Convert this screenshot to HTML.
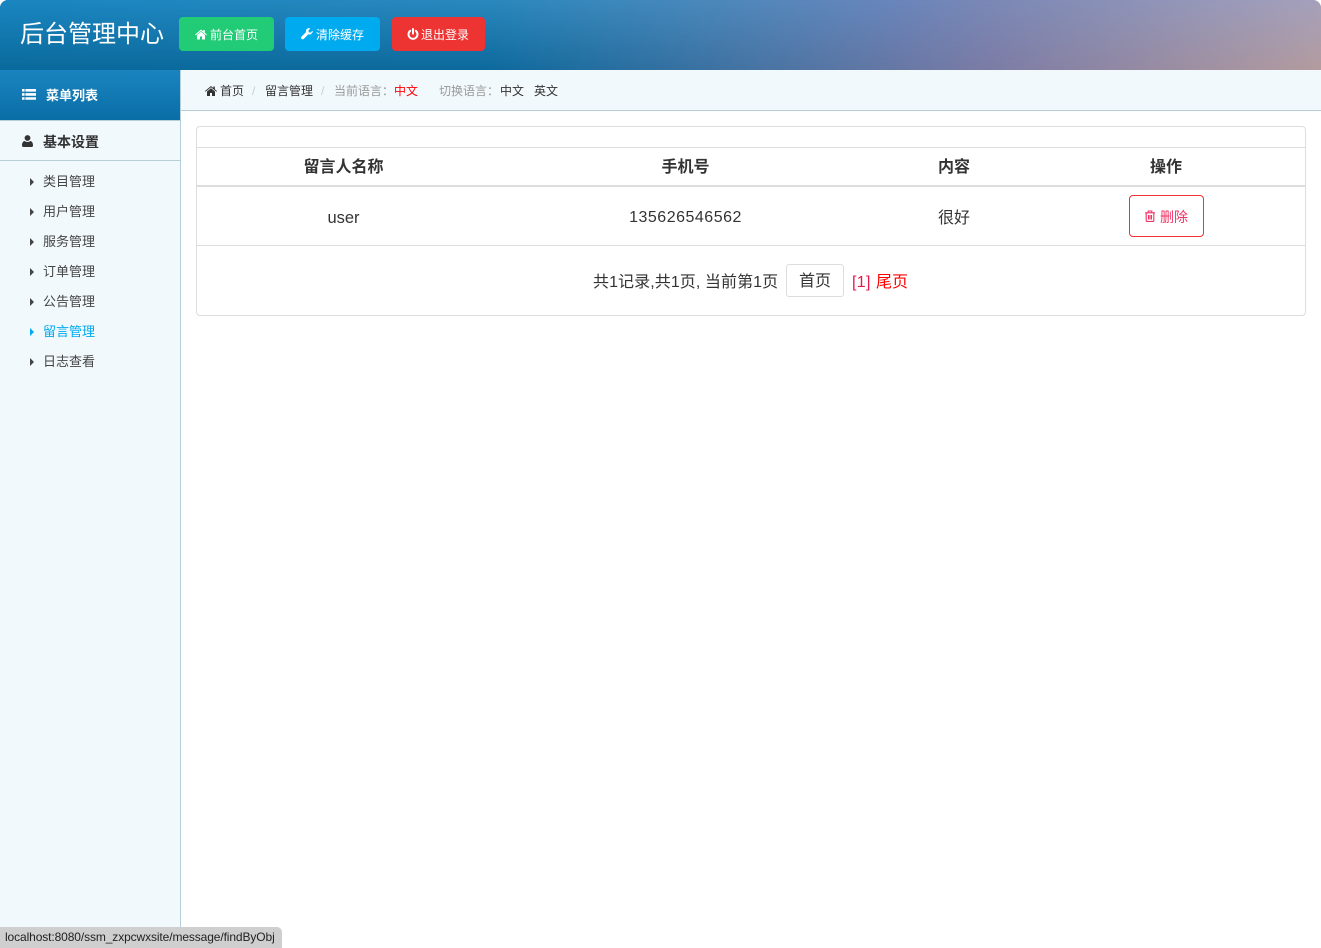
<!DOCTYPE html>
<html lang="zh-CN">
<head>
<meta charset="utf-8">
<title>后台管理中心</title>
<style>
*{box-sizing:border-box}
html,body{margin:0;padding:0;background:#fff}
body{position:relative;width:1321px;height:948px;overflow:hidden;font-family:"Liberation Sans","Noto Sans CJK SC",sans-serif;color:#333}
.a{position:absolute;white-space:nowrap}
svg{display:block;position:absolute}
#hd{left:0;top:0;width:1321px;height:70px;border-radius:8px 8px 0 0;overflow:hidden;background:linear-gradient(to right,#0a6a9c 0px,#0e6a9d 490px,#3a72a2 700px,#6878a5 900px,#7c7ca6 990px,#b49c9f 1321px)}
#hd i{position:absolute;left:0;top:0;width:100%;height:100%;background:linear-gradient(to right,#1a86c1 0px,#2a88bd 490px,#4a88bb 700px,#6a85bb 900px,#7a88b5 990px,#a5a0bb 1321px);-webkit-mask-image:linear-gradient(to bottom,#000,transparent);mask-image:linear-gradient(to bottom,#000,transparent)}
.logo{left:20px;top:16px;font-size:24px;line-height:38px;color:#fff}
.btn{top:17px;height:34px;border-radius:4px;color:#fff;font-size:12px;line-height:36px}
.btn span{position:absolute;top:0;left:31px}
#side{left:0;top:70px;width:181px;height:878px;background:#f2f9fd;border-right:1px solid #b5cfd9}
#mh{left:0;top:70px;width:180px;height:51px;background:linear-gradient(to bottom,#1a84c0,#0a6ea6);border-bottom:1px solid #b5cfd9}
#bs{left:0;top:121px;width:180px;height:40px;border-bottom:1px solid #b5cfd9}
.mi{left:43px;font-size:13px;line-height:20px;color:#444}
.ar{left:30px;width:0;height:0;border-left:4.5px solid #444;border-top:4px solid transparent;border-bottom:4px solid transparent}
#bc{left:181px;top:70px;width:1140px;height:41px;background:#f2f9fd;border-bottom:1px solid #b5cfd9}
.bt{top:81px;font-size:12px;line-height:20px}
.card{left:196px;top:126px;width:1110px;height:190px;border:1px solid #ddd;border-radius:4px;background:#fff}
.ln{left:197px;width:1108px;background:#ddd}
.th{top:156px;font-size:16px;line-height:24px;font-weight:bold;transform:translateX(-50%);color:#333}
.td{top:206px;font-size:16px;line-height:24px;transform:translateX(-50%);color:#333}
#del{left:1129px;top:195px;width:75px;height:42px;border:1px solid #ee3333;border-radius:4px;background:#fff}
#pg{left:786px;top:264px;width:58px;height:33px;border:1px solid #ddd;border-radius:3px;background:#fff;text-align:center;font-size:16px;line-height:34px;color:#333}
#st{left:0;top:927px;width:282px;height:21px;background:#cfcfcf;border-top-right-radius:5px;font-size:12px;line-height:21px;padding-left:5px;letter-spacing:-.11px;color:#222}
</style>
</head>
<body>
<div class="a" id="hd"><i></i></div>
<div class="a logo">后台管理中心</div>

<div class="a btn" style="left:179px;width:95px;background:#22cc77">
<svg style="left:16px;top:12px" width="12" height="11" viewBox="0 0 12 11"><path fill="#fff" d="M6 0.500L0 5.700l.7.7L6 2l5.300 4.400.7-.7L9.800 3.800V1H8.300v1.500zM2 6V10.500h3V7.500h2v3h3V6L6 2.700z"/></svg>
<span>前台首页</span></div>
<div class="a btn" style="left:285px;width:95px;background:#00aaee">
<svg style="left:16px;top:11px" width="12" height="12" viewBox="0 0 12 12"><path fill="#fff" d="M11.600 2.600L9.600 4.600 7.800 4.200 7.400 2.400 9.400.4C8 -.2 6.600.2 5.800 1 5 1.800 4.800 3 5.100 4L.5 8.600c-.6.6-.6 1.600 0 2.300.6.6 1.700.6 2.300 0L7.400 6.300c1.200.4 2.400.1 3.300-.8.9-.8 1.200-2 .9-2.900z"/></svg>
<span>清除缓存</span></div>
<div class="a btn" style="left:392px;width:93px;background:#ee3333">
<svg style="left:15px;top:11px" width="12" height="12" viewBox="0 0 12 12"><path fill="none" stroke="#fff" stroke-width="2" stroke-linecap="round" d="M3.200 2.800A4.500 4.500 0 1 0 8.800 2.800M6 1V5.600"/></svg>
<span style="left:29px">退出登录</span></div>

<div class="a" id="side"></div>
<div class="a" id="mh"></div>
<svg style="left:22px;top:89px" width="14" height="11" viewBox="0 0 14 11"><path fill="#fff" d="M0 0h2.600v2.600H0zM3.400 0H14v2.600H3.400zM0 4.100h2.600v2.600H0zM3.400 4.100H14v2.600H3.400zM0 8.200h2.600v2.600H0zM3.400 8.200H14v2.600H3.400z"/></svg>
<div class="a" style="left:46px;top:86px;font-size:13px;line-height:20px;font-weight:bold;color:#fff">菜单列表</div>
<div class="a" id="bs"></div>
<svg style="left:22px;top:135px" width="11" height="12" viewBox="0 0 11 12"><circle cx="5.500" cy="3" r="2.900" fill="#333"/><path fill="#333" d="M0 10.500C0 7.800 1 6.300 2.600 6 3.400 6.600 4.400 7 5.500 7S7.600 6.600 8.400 6C10 6.300 11 7.800 11 10.500 11 11.400 10.400 12 9.500 12H1.500C.6 12 0 11.400 0 10.500z"/></svg>
<div class="a" style="left:43px;top:132px;font-size:14px;line-height:20px;font-weight:bold;color:#333">基本设置</div>

<div class="a ar" style="top:177.500px"></div><div class="a mi" style="top:172px">类目管理</div>
<div class="a ar" style="top:207.500px"></div><div class="a mi" style="top:202px">用户管理</div>
<div class="a ar" style="top:237.500px"></div><div class="a mi" style="top:232px">服务管理</div>
<div class="a ar" style="top:267.500px"></div><div class="a mi" style="top:262px">订单管理</div>
<div class="a ar" style="top:297.500px"></div><div class="a mi" style="top:292px">公告管理</div>
<div class="a ar" style="top:327.500px;border-left-color:#00aaee"></div><div class="a mi" style="top:322px;color:#00aaee">留言管理</div>
<div class="a ar" style="top:357.500px"></div><div class="a mi" style="top:352px">日志查看</div>

<div class="a" id="bc"></div>
<svg style="left:205px;top:85.500px" width="12" height="10" viewBox="0 0 12 10"><path fill="#333" d="M6 0L0 5l.6.7L6 1.300l5.400 4.400L12 5 9.800 3.200V.5H8.300v1.500zM2 5.500V10h3V7h2v3h3V5.500L6 2.200z"/></svg>
<div class="a bt" style="left:220px;color:#333">首页</div>
<div class="a bt" style="left:252px;color:#ccc">/</div>
<div class="a bt" style="left:265px;color:#333">留言管理</div>
<div class="a bt" style="left:321px;color:#ccc">/</div>
<div class="a bt" style="left:334px;color:#999">当前语言：</div>
<div class="a bt" style="left:394px;color:#ff0000">中文</div>
<div class="a bt" style="left:439px;color:#999">切换语言：</div>
<div class="a bt" style="left:500px;color:#333">中文</div>
<div class="a bt" style="left:534px;color:#333">英文</div>

<div class="a card"></div>
<div class="a ln" style="top:147px;height:1px"></div>
<div class="a ln" style="top:185px;height:2px"></div>
<div class="a ln" style="top:245px;height:1px"></div>

<div class="a th" style="left:343.500px">留言人名称</div>
<div class="a th" style="left:685.500px">手机号</div>
<div class="a th" style="left:954px">内容</div>
<div class="a th" style="left:1166px">操作</div>

<div class="a td" style="left:343.500px;font-size:16.500px">user</div>
<div class="a td" style="left:685.500px;letter-spacing:.5px">135626546562</div>
<div class="a td" style="left:954px;top:207px">很好</div>

<div class="a" id="del"></div>
<svg style="left:1144px;top:210px" width="12" height="12" viewBox="0 0 12 12"><path fill="none" stroke="#ee3366" stroke-width="1.100" d="M1 2.800H11M4.200 2.600V1H7.800V2.600M2.200 2.800V10.500C2.200 11 2.600 11.400 3 11.400H9C9.400 11.400 9.800 11 9.800 10.500V2.800M4.500 5V9.500M6 5V9.500M7.500 5V9.500"/></svg>
<div class="a" style="left:1160px;top:207px;font-size:14px;line-height:20px;color:#ee3366">删除</div>

<div class="a" style="left:593px;top:271px;font-size:16px;line-height:24px;letter-spacing:.08px;color:#333">共1记录,共1页, 当前第1页</div>
<div class="a" id="pg">首页</div>
<div class="a" style="left:852px;top:271px;font-size:16px;line-height:24px;letter-spacing:.3px;color:#e6194b">[1]</div>
<div class="a" style="left:876px;top:271px;font-size:16px;line-height:24px;color:#ff0000">尾页</div>

<div class="a" id="st">localhost:8080/ssm_zxpcwxsite/message/findByObj</div>
</body>
</html>
